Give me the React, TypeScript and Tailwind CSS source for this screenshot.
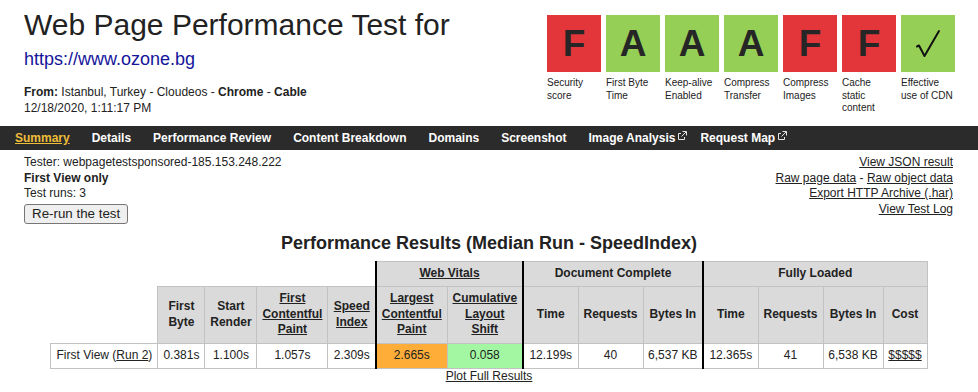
const grades = [
  { grade: 'F', label: 'Security score', bad: true },
  { grade: 'A', label: 'First Byte Time' },
  { grade: 'A', label: 'Keep-alive Enabled' },
  { grade: 'A', label: 'Compress Transfer' },
  { grade: 'F', label: 'Compress Images', bad: true },
  { grade: 'F', label: 'Cache static content', bad: true },
  { grade: 'check', label: 'Effective use of CDN' },
];

const navItems = [
  { label: 'Summary', active: true },
  { label: 'Details' },
  { label: 'Performance Review' },
  { label: 'Content Breakdown' },
  { label: 'Domains' },
  { label: 'Screenshot' },
  { label: 'Image Analysis', external: true },
  { label: 'Request Map', external: true },
];

function ExternalIcon() {
  return (
    <svg width="10" height="10" viewBox="0 0 10 10" className="ml-[2px] inline-block align-[1px]" fill="none" stroke="#e6e6e6" strokeWidth="1">
      <path d="M4 2.5H1.5v6h6V6" />
      <path d="M4.5 5.5L9 1M5.5 0.5H9.5V4.5" />
    </svg>
  );
}

function Check() {
  return (
    <svg width="28" height="30" viewBox="0 0 28 30" fill="none" stroke="#111" strokeWidth="2" strokeLinecap="round" strokeLinejoin="round">
      <path d="M3 17.5L5 16.5L10.5 27L25 2" />
    </svg>
  );
}

const th = 'border border-[#c2c2c2] bg-[#dadada] font-bold text-center align-middle px-[4px]';
const td = 'border border-[#c2c2c2] text-center align-middle px-[4px]';
const sep = 'border-l-2 border-l-black';

export default function App() {
  return (
    <div className="min-h-screen bg-white text-[#222] font-['Liberation_Sans',Arial,sans-serif]">
      <header className="flex justify-between">
        <div className="pl-[24px] pt-[8px]">
          <h1 className="text-[30px] leading-[34px] font-normal">Web Page Performance Test for</h1>
          <a className="mt-[7px] block text-[18px] leading-[20px] text-[#14149a]">https://www.ozone.bg</a>
          <div className="mt-[15px] text-[12px] leading-[16px]">
            <div>
              <b>From:</b> Istanbul, Turkey - Cloudeos - <b>Chrome</b> - <b>Cable</b>
            </div>
            <div>12/18/2020, 1:11:17 PM</div>
          </div>
        </div>
        <div className="mr-[23px] mt-[15px] flex gap-[5px]">
          {grades.map((g) => (
            <div key={g.label} className="w-[54px]">
              <div
                className={`flex h-[57px] w-[54px] items-center justify-center ${g.bad ? 'bg-[#e3363a]' : 'bg-[#95cf55]'}`}
              >
                {g.grade === 'check' ? (
                  <Check />
                ) : (
                  <span className="text-[37px] font-bold leading-none text-[#262626]">{g.grade}</span>
                )}
              </div>
              <div className="mt-[5px] text-[10px] leading-[12.5px]">{g.label}</div>
            </div>
          ))}
        </div>
      </header>

      <nav className="mt-[10px] flex h-[24px] items-center bg-[#2b2b2b] pl-[4px]">
        {navItems.map((n) => (
          <span
            key={n.label}
            className={`px-[11px] text-[12px] font-bold ${n.active ? 'text-[#efbd39] underline' : 'text-white'} ${n.external ? 'pr-[2px]' : ''}`}
          >
            {n.label}
            {n.external && <ExternalIcon />}
          </span>
        ))}
      </nav>

      <div className="flex justify-between px-[24px] pt-[5px] text-[12px] leading-[15.5px]">
        <div>
          <div>Tester: webpagetestsponsored-185.153.248.222</div>
          <div className="font-bold">First View only</div>
          <div>Test runs: 3</div>
          <button className="mt-[2px] h-[20px] rounded-[3px] border border-[#767676] bg-[#efefef] px-[7px] text-[13.33px] leading-[16px]">
            Re-run the test
          </button>
        </div>
        <div className="pr-px text-right">
          <div><a className="underline">View JSON result</a></div>
          <div>
            <a className="underline">Raw page data</a> - <a className="underline">Raw object data</a>
          </div>
          <div><a className="underline">Export HTTP Archive (.har)</a></div>
          <div><a className="underline">View Test Log</a></div>
        </div>
      </div>

      <h2 className="mt-[9px] text-center text-[18px] font-bold leading-[21px]">
        Performance Results (Median Run - SpeedIndex)
      </h2>

      <table className="mx-auto mt-[7px] w-[876px] table-fixed border-collapse text-[12px] leading-[15.5px]">
        <colgroup>
          <col className="w-[107px]" />
          <col className="w-[47px]" />
          <col className="w-[52px]" />
          <col className="w-[71px]" />
          <col className="w-[48px]" />
          <col className="w-[71px]" />
          <col className="w-[76px]" />
          <col className="w-[55px]" />
          <col className="w-[65px]" />
          <col className="w-[60px]" />
          <col className="w-[55px]" />
          <col className="w-[65px]" />
          <col className="w-[60px]" />
          <col className="w-[44px]" />
        </colgroup>
        <thead>
          <tr className="h-[25px]">
            <th colSpan={5} className="border-0"></th>
            <th colSpan={2} className={`${th} ${sep}`}>
              <span className="underline">Web Vitals</span>
            </th>
            <th colSpan={3} className={`${th} ${sep}`}>Document Complete</th>
            <th colSpan={4} className={`${th} ${sep}`}>Fully Loaded</th>
          </tr>
          <tr className="h-[57px]">
            <th className="border-0"></th>
            <th className={th}>First Byte</th>
            <th className={th}>Start Render</th>
            <th className={th}><span className="underline">First Contentful Paint</span></th>
            <th className={th}><span className="underline">Speed Index</span></th>
            <th className={`${th} ${sep}`}><span className="underline">Largest Contentful Paint</span></th>
            <th className={`${th} px-[5px]`}><span className="underline">Cumulative Layout Shift</span></th>
            <th className={`${th} ${sep}`}>Time</th>
            <th className={th}>Requests</th>
            <th className={th}>Bytes In</th>
            <th className={`${th} ${sep}`}>Time</th>
            <th className={th}>Requests</th>
            <th className={th}>Bytes In</th>
            <th className={th}>Cost</th>
          </tr>
        </thead>
        <tbody>
          <tr className="h-[25px]">
            <td className={`${td} whitespace-nowrap`}>
              First View (<a className="underline">Run 2</a>)
            </td>
            <td className={td}>0.381s</td>
            <td className={td}>1.100s</td>
            <td className={td}>1.057s</td>
            <td className={td}>2.309s</td>
            <td className={`${td} ${sep} bg-[#ffad39]`}>2.665s</td>
            <td className={`${td} bg-[#a3f7a3]`}>0.058</td>
            <td className={`${td} ${sep}`}>12.199s</td>
            <td className={td}>40</td>
            <td className={`${td} whitespace-nowrap`}>6,537 KB</td>
            <td className={`${td} ${sep}`}>12.365s</td>
            <td className={td}>41</td>
            <td className={`${td} whitespace-nowrap`}>6,538 KB</td>
            <td className={td}><a className="underline">$$$$$</a></td>
          </tr>
        </tbody>
      </table>
      <div className="text-center text-[12px] leading-[15px]">
        <a className="underline">Plot Full Results</a>
      </div>
    </div>
  );
}
